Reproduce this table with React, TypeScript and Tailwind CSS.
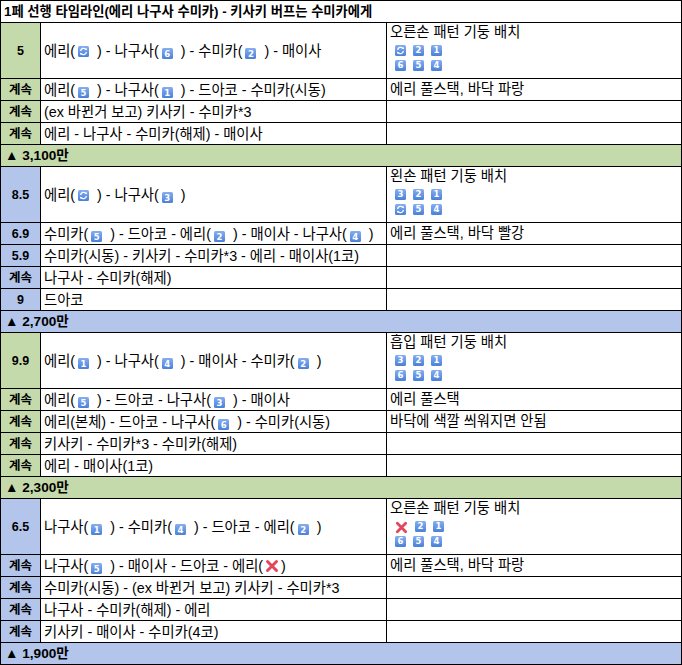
import React from "react";

const GREEN = "bg-[#c5daab]";
const BLUE = "bg-[#b3c5ea]";

function Key({ n }: { n: string }) {
  return (
    <span className="inline-flex items-center justify-center w-[11px] h-[11px] rounded-[1.5px] bg-linear-to-b from-[#86aef0] to-[#4a80d8] text-white text-[8.5px] font-bold leading-none align-[-1px] font-['DejaVu_Sans',sans-serif]">
      {n}
    </span>
  );
}

function Refresh() {
  return (
    <svg width="11" height="11" viewBox="0 0 11 11" className="inline-block align-[-1px]">
      <defs>
        <linearGradient id="rg" x1="0" y1="0" x2="0" y2="1">
          <stop offset="0" stopColor="#86aef0" />
          <stop offset="1" stopColor="#4a80d8" />
        </linearGradient>
      </defs>
      <rect x="0" y="0" width="11" height="11" rx="1.5" fill="url(#rg)" />
      <path d="M2.6 5 A3 3 0 0 1 8 3.6" stroke="#fff" strokeWidth="1.3" fill="none" />
      <path d="M8.4 6 A3 3 0 0 1 3 7.4" stroke="#fff" strokeWidth="1.3" fill="none" />
      <path d="M6.8 2.4 L9 2.4 L9 4.6 Z" fill="#fff" />
      <path d="M4.2 8.6 L2 8.6 L2 6.4 Z" fill="#fff" />
    </svg>
  );
}

function Cross({ size = 14 }: { size?: number }) {
  return (
    <svg width={size} height={size} viewBox="0 0 14 14" className="inline-block align-[-2px]">
      <path d="M2.5 2.5 L11.5 11.5 M11.5 2.5 L2.5 11.5" stroke="#e0475b" strokeWidth="3" strokeLinecap="round" />
    </svg>
  );
}

function K({ children }: { children: React.ReactNode }) {
  return <span className="inline-block ml-[3px] mr-[8px] leading-none">{children}</span>;
}

function Grid({ top, bottom }: { top: React.ReactNode[]; bottom: React.ReactNode[] }) {
  return (
    <div className="flex flex-col gap-[4px] pl-[5px] pt-[4px]">
      <div className="flex gap-[7px] h-[11px]">{top.map((t, i) => <span key={i} className="flex">{t}</span>)}</div>
      <div className="flex gap-[7px] h-[11px]">{bottom.map((t, i) => <span key={i} className="flex">{t}</span>)}</div>
    </div>
  );
}

type Row =
  | { kind: "section"; label: string; color: string }
  | { kind: "row"; left: string; color: string; mid: React.ReactNode; right?: React.ReactNode; tall?: boolean; rightTitle?: string; grid?: { top: React.ReactNode[]; bottom: React.ReactNode[] } };

const R = <Refresh />;

const rows: Row[] = [
  {
    kind: "row", left: "5", color: GREEN, tall: true,
    mid: <>에리(<K>{R}</K>) - 나구사(<K><Key n="6" /></K>) - 수미카(<K><Key n="2" /></K>) - 매이사</>,
    rightTitle: "오른손 패턴 기둥 배치",
    grid: { top: [R, <Key n="2" />, <Key n="1" />], bottom: [<Key n="6" />, <Key n="5" />, <Key n="4" />] },
  },
  { kind: "row", left: "계속", color: GREEN, mid: <>에리(<K><Key n="5" /></K>) - 나구사(<K><Key n="1" /></K>) - 드아코 - 수미카(시동)</>, right: "에리 풀스택, 바닥 파랑" },
  { kind: "row", left: "계속", color: GREEN, mid: <>(ex 바뀐거 보고) 키사키 - 수미카*3</> },
  { kind: "row", left: "계속", color: GREEN, mid: <>에리 - 나구사 - 수미카(해제) - 매이사</> },
  { kind: "section", label: "▲ 3,100만", color: GREEN },
  {
    kind: "row", left: "8.5", color: BLUE, tall: true,
    mid: <>에리(<K>{R}</K>) - 나구사(<K><Key n="3" /></K>)</>,
    rightTitle: "왼손 패턴 기둥 배치",
    grid: { top: [<Key n="3" />, <Key n="2" />, <Key n="1" />], bottom: [R, <Key n="5" />, <Key n="4" />] },
  },
  { kind: "row", left: "6.9", color: BLUE, mid: <>수미카(<K><Key n="5" /></K>) - 드아코 - 에리(<K><Key n="2" /></K>) - 매이사 - 나구사(<K><Key n="4" /></K>)</>, right: "에리 풀스택, 바닥 빨강" },
  { kind: "row", left: "5.9", color: BLUE, mid: <>수미카(시동) - 키사키 - 수미카*3 - 에리 - 매이사(1코)</> },
  { kind: "row", left: "계속", color: BLUE, mid: <>나구사 - 수미카(해제)</> },
  { kind: "row", left: "9", color: BLUE, mid: <>드아코</> },
  { kind: "section", label: "▲ 2,700만", color: BLUE },
  {
    kind: "row", left: "9.9", color: GREEN, tall: true,
    mid: <>에리(<K><Key n="1" /></K>) - 나구사(<K><Key n="4" /></K>) - 매이사 - 수미카(<K><Key n="2" /></K>)</>,
    rightTitle: "흡입 패턴 기둥 배치",
    grid: { top: [<Key n="3" />, <Key n="2" />, <Key n="1" />], bottom: [<Key n="6" />, <Key n="5" />, <Key n="4" />] },
  },
  { kind: "row", left: "계속", color: GREEN, mid: <>에리(<K><Key n="5" /></K>) - 드아코 - 나구사(<K><Key n="3" /></K>) - 매이사</>, right: "에리 풀스택" },
  { kind: "row", left: "계속", color: GREEN, mid: <>에리(본체) - 드아코 - 나구사(<K><Key n="6" /></K>) - 수미카(시동)</>, right: "바닥에 색깔 씌워지면 안됨" },
  { kind: "row", left: "계속", color: GREEN, mid: <>키사키 - 수미카*3 - 수미카(해제)</> },
  { kind: "row", left: "계속", color: GREEN, mid: <>에리 - 매이사(1코)</> },
  { kind: "section", label: "▲ 2,300만", color: GREEN },
  {
    kind: "row", left: "6.5", color: BLUE, tall: true,
    mid: <>나구사(<K><Key n="1" /></K>) - 수미카(<K><Key n="4" /></K>) - 드아코 - 에리(<K><Key n="2" /></K>)</>,
    rightTitle: "오른손 패턴 기둥 배치",
    grid: { top: [<Cross size={13} />, <Key n="2" />, <Key n="1" />], bottom: [<Key n="6" />, <Key n="5" />, <Key n="4" />] },
  },
  { kind: "row", left: "계속", color: BLUE, mid: <>나구사(<K><Key n="5" /></K>) - 매이사 - 드아코 - 에리(<span className="inline-block ml-[2px] mr-[2px] leading-none"><Cross /></span>)</>, right: "에리 풀스택, 바닥 파랑" },
  { kind: "row", left: "계속", color: BLUE, mid: <>수미카(시동) - (ex 바뀐거 보고) 키사키 - 수미카*3</> },
  { kind: "row", left: "계속", color: BLUE, mid: <>나구사 - 수미카(해제) - 에리</> },
  { kind: "row", left: "계속", color: BLUE, mid: <>키사키 - 매이사 - 수미카(4코)</> },
  { kind: "section", label: "▲ 1,900만", color: BLUE },
];

export default function App() {
  return (
    <div className="bg-white w-[682px] h-[665px] font-['Liberation_Sans','Noto_Sans_CJK_KR',sans-serif] text-[14.3px] text-black">
      <table className="border-collapse table-fixed w-[681px]">
        <colgroup>
          <col className="w-[40px]" />
          <col className="w-[346px]" />
          <col className="w-[295px]" />
        </colgroup>
        <tbody>
          <tr className="h-[22px]">
            <td colSpan={3} className="border border-black px-[3px] py-0 font-bold text-[13.3px] leading-[20px] whitespace-nowrap overflow-hidden">
              1페 선행 타임라인(에리 나구사 수미카) - 키사키 버프는 수미카에게
            </td>
          </tr>
          {rows.map((r, i) => {
            if (r.kind === "section") {
              return (
                <tr key={i} className="h-[22px]">
                  <td colSpan={3} className={`border border-black px-[4px] py-0 font-bold text-[13.6px] leading-[20px] ${r.color}`}>
                    {r.label}
                  </td>
                </tr>
              );
            }
            return (
              <tr key={i} className={r.tall ? "h-[56px]" : "h-[22px]"}>
                <td className={`border border-black p-0 text-center font-bold text-[12.5px] leading-[20px] whitespace-nowrap overflow-hidden ${r.color}`}>{r.left}</td>
                <td className="border border-black px-[3px] py-0 leading-[20px] whitespace-nowrap overflow-hidden">{r.mid}</td>
                <td className="border border-black px-[3px] py-0 align-top leading-[20px] whitespace-nowrap overflow-hidden">
                  {r.rightTitle ? (
                    <div className="h-[54px]">
                      <div className="leading-[17px] pt-[1px]">{r.rightTitle}</div>
                      {r.grid && <Grid top={r.grid.top} bottom={r.grid.bottom} />}
                    </div>
                  ) : (
                    r.right
                  )}
                </td>
              </tr>
            );
          })}
        </tbody>
      </table>
    </div>
  );
}
